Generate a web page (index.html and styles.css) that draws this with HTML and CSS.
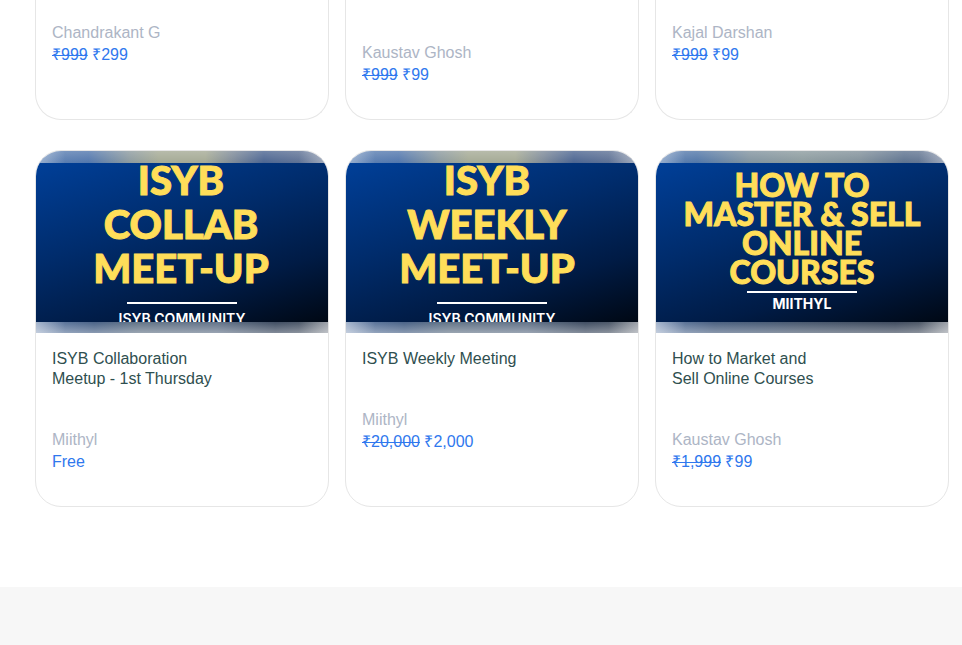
FILE: index.html
```
<!DOCTYPE html>
<html lang="en">
<head>
<meta charset="utf-8">
<title>Courses</title>
<link rel="stylesheet" href="styles.css">
</head>
<body>
<main class="courses">
  <article class="card card--tail">
    <div class="card-body">
      <p class="author">Chandrakant G</p>
      <p class="price"><s>₹999</s> ₹299</p>
    </div>
  </article>
  <article class="card card--tail card--long">
    <div class="card-body">
      <p class="author">Kaustav Ghosh</p>
      <p class="price"><s>₹999</s> ₹99</p>
    </div>
  </article>
  <article class="card card--tail">
    <div class="card-body">
      <p class="author">Kajal Darshan</p>
      <p class="price"><s>₹999</s> ₹99</p>
    </div>
  </article>

  <article class="card">
    <div class="media">
      <div class="art art--meetup">
        <p class="headline">ISYB<br>COLLAB<br>MEET-UP</p>
        <div class="rule"></div>
        <p class="tagline">ISYB COMMUNITY</p>
      </div>
    </div>
    <div class="card-body">
      <h2 class="title">ISYB Collaboration<br>Meetup - 1st Thursday</h2>
      <p class="author">Miithyl</p>
      <p class="price">Free</p>
    </div>
  </article>
  <article class="card">
    <div class="media">
      <div class="art art--meetup art--weekly">
        <p class="headline">ISYB<br>WEEKLY<br>MEET-UP</p>
        <div class="rule"></div>
        <p class="tagline">ISYB COMMUNITY</p>
      </div>
    </div>
    <div class="card-body">
      <h2 class="title">ISYB Weekly Meeting</h2>
      <p class="author">Miithyl</p>
      <p class="price"><s>₹20,000</s> ₹2,000</p>
    </div>
  </article>
  <article class="card">
    <div class="media media--wide">
      <div class="art art--course">
        <p class="headline">HOW TO<br>MASTER &amp; SELL<br>ONLINE<br>COURSES</p>
        <div class="rule"></div>
        <p class="tagline">MIITHYL</p>
      </div>
    </div>
    <div class="card-body">
      <h2 class="title">How to Market and<br>Sell Online Courses</h2>
      <p class="author">Kaustav Ghosh</p>
      <p class="price"><s>₹1,999</s> ₹99</p>
    </div>
  </article>
</main>
<footer class="footer"></footer>
</body>
</html>
```
FILE: styles.css
```
* { box-sizing: border-box; }

body {
  display: flex;
  flex-direction: column;
  min-height: 100vh;
  margin: 0;
  background: #fff;
  font: 16px/20px "Liberation Sans", Arial, sans-serif;
}

p, h2 { margin: 0; }

.courses {
  display: grid;
  grid-template-columns: repeat(3, minmax(0, 1fr));
  gap: 30px 16px;
  padding: 0 13px 80px 35px;
}

.card {
  overflow: hidden;
  border: 1px solid #e6e6e6;
  border-radius: 26px;
  background: #fff;
}

.card-body { padding: 16px 16px 34px; }

/* Cards continuing from above the fold */
.card--tail {
  border-top: 0;
  border-radius: 0 0 26px 26px;
}
.card--tail .card-body { padding-top: 23px; }
.card--long .card-body { padding-top: 43px; }

.title {
  margin-bottom: 41px;
  color: #2f4f4f;
  font-size: 16px;
  font-weight: 400;
}
.author {
  margin-bottom: 2px;
  color: #adb5c5;
}
.price { color: #2f78ee; }

/* Cover: soft backdrop bands above and below the artwork */
.media {
  padding: 12px 0 11px;
  background:
    linear-gradient(90deg, rgba(255,255,255,.4), transparent 10%, transparent 90%, rgba(255,255,255,.4)),
    linear-gradient(rgba(255,255,255,.2), transparent) top / 100% 12px no-repeat,
    linear-gradient(transparent, rgba(255,255,255,.35)) bottom / 100% 11px no-repeat,
    linear-gradient(90deg, #5f82b3, #5277ad 18%, #8c9a9f 32%, #a5aa95 42%, #a5aa95 58%, #7f8b98 67%, #4c6591 78%, #6b7a96) top / 100% 12px no-repeat,
    linear-gradient(90deg, #6983ab, #4a6387 20%, #647588 35%, #64748a 62%, #3f4d62 82%, #5c6470) bottom / 100% 11px no-repeat;
}
.media--wide {
  background:
    linear-gradient(90deg, rgba(255,255,255,.4), transparent 10%, transparent 90%, rgba(255,255,255,.4)),
    linear-gradient(rgba(255,255,255,.2), transparent) top / 100% 12px no-repeat,
    linear-gradient(transparent, rgba(255,255,255,.35)) bottom / 100% 11px no-repeat,
    linear-gradient(90deg, #5f82b3, #5277a8 14%, #81939f 32%, #8c9b9e 50%, #81909a 70%, #5e738f 85%, #6b7a96) top / 100% 12px no-repeat,
    linear-gradient(90deg, #6983ab, #4a6080 20%, #48586e 50%, #3f4b5e 82%, #5c6470) bottom / 100% 11px no-repeat;
}

.art {
  display: flex;
  flex-direction: column;
  align-items: center;
  height: 159px;
  overflow: hidden;
  background: linear-gradient(163deg, #003f98, #002c6c 40%, #001b45 72%, #000814);
  color: #fff;
  text-align: center;
  white-space: nowrap;
}
.headline {
  color: #ffde59;
  font-family: Lato, sans-serif;
  font-weight: 900;
  -webkit-text-stroke: 1px #ffde59;
}
.rule {
  flex: none;
  width: 110px;
  height: 2px;
  background: #fff;
}

.art--meetup .headline {
  margin-top: -5px;
  padding-right: 2px;
  font-size: 40px;
  line-height: 44px;
}
.art--weekly .headline { padding-right: 10px; }
.art--meetup .rule { margin-top: 12px; }
.art--meetup .tagline {
  margin-top: 5px;
  font: 600 14px/20px Inter, sans-serif;
}

.art--course .headline {
  margin-top: 7px;
  font-size: 32px;
  line-height: 29px;
}
.art--course .rule { margin-top: 5px; }
.art--course .tagline {
  margin-top: 1px;
  font: 700 14px/20px Inter, sans-serif;
}

.footer {
  flex: 1;
  background: #f7f7f7;
}
```
